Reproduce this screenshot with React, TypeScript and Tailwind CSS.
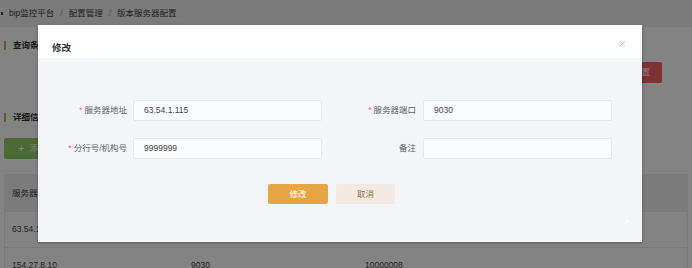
import React from "react";
import { X } from "lucide-react";

const font = "font-['Liberation_Sans','Noto_Sans_CJK_SC',sans-serif]";

const FormLabel: React.FC<{ text: string; required?: boolean; pad: string }> = ({ text, required, pad }) => (
  <div className={`flex items-center justify-end text-[8.5px] text-[#606266] ${pad}`}>
    {required && <span className="mr-[2px] text-[#f56c6c]">*</span>}
    <span>{text}</span>
  </div>
);

const FormInput: React.FC<{ value?: string }> = ({ value }) => (
  <div className="flex h-[21px] items-center rounded-[2px] border border-[#e6e8ef] bg-[#fafbfd] pl-[10px] text-[8.5px] text-[#444]">
    {value}
  </div>
);

const SectionTitle: React.FC<{ text: string }> = ({ text }) => (
  <div className="flex h-[12px] items-center gap-[7px] pl-[4px]">
    <div className="h-[9px] w-[2px] bg-[#e0a84a]" />
    <span className="text-[8.5px] font-bold leading-[12px] text-[#333]">{text}</span>
  </div>
);

export default function App() {
  return (
    <div className={`relative h-[268px] w-[692px] overflow-hidden bg-white ${font}`}>
      {/* page underneath */}
      <div className="flex h-[27px] items-center bg-[#efefef] text-[8.5px]">
        <div className="ml-[1px] mr-[6px] h-[3px] w-[2px] bg-[#444]" />
        <span className="text-[#444]">bip监控平台</span>
        <span className="mx-[6px] text-[#aaa]">/</span>
        <span className="text-[#444]">配置管理</span>
        <span className="mx-[6px] text-[#aaa]">/</span>
        <span className="text-[#444]">版本服务器配置</span>
      </div>

      <div className="mt-[12px]">
        <SectionTitle text="查询条件" />
      </div>
      <div className="mt-[11px] flex justify-end gap-[8px] pr-[30px]">
        <div className="flex h-[21px] w-[41px] items-center justify-center rounded-[2px] bg-[#409eff] text-[8.5px] text-white">查询</div>
        <div className="flex h-[21px] w-[41px] items-center justify-center rounded-[2px] bg-[#f76165] text-[8.5px] text-white">重置</div>
      </div>

      <div className="mt-[28px]">
        <SectionTitle text="详细信息" />
      </div>
      <div className="ml-[4px] mt-[15px] flex h-[21px] w-[60px] items-center gap-[5px] rounded-[2px] bg-[#92ce69] pl-[14px] text-[8.5px] text-white">
        <span className="text-[11px] leading-none">+</span>
        <span>添加</span>
      </div>

      <div className="mx-[4px] mt-[15px] border border-[#ebeef5] text-[8.5px] text-[#444]">
        <div className="grid h-[36px] grid-cols-[179px_174px_1fr] items-center bg-[#f0f0f0] pl-[7px]">
          <span>服务器地址</span>
          <span>服务器端口</span>
          <span>分行号/机构号</span>
        </div>
        <div className="grid h-[36px] grid-cols-[179px_174px_1fr] items-center border-t border-[#ebeef5] pl-[7px]">
          <span>63.54.1.115</span>
          <span>9030</span>
          <span>9999999</span>
        </div>
        <div className="grid h-[36px] grid-cols-[179px_174px_1fr] items-center border-t border-[#ebeef5] pl-[7px]">
          <span>154.27.8.10</span>
          <span>9030</span>
          <span>10000008</span>
        </div>
      </div>

      {/* overlay */}
      <div className="absolute inset-0 bg-black/[0.485]" />

      {/* dialog */}
      <div className="absolute left-[38px] top-[25px] flex h-[217px] w-[604px] flex-col shadow-[0_1px_3px_rgba(0,0,0,0.3)]">
        <div className="relative h-[33px] bg-white pl-[14px] pt-[9px]">
          <span className="text-[9.5px] font-bold leading-[20px] text-[#303133]">修改</span>
          <X className="absolute right-[15px] top-[14px] h-[9px] w-[9px] text-[#95a0c6]" strokeWidth={1.6} />
        </div>
        <div className="relative flex-1 bg-[#f4f5f9] pt-[42px]">
          <div className="grid grid-cols-[95px_189px_101px_189px] gap-y-[17px]">
            <FormLabel text="服务器地址" required pad="pr-[6px]" />
            <FormInput value="63.54.1.115" />
            <FormLabel text="服务器端口" required pad="pr-[7px]" />
            <FormInput value="9030" />
            <FormLabel text="分行号/机构号" required pad="pr-[6px]" />
            <FormInput value="9999999" />
            <FormLabel text="备注" pad="pr-[7px]" />
            <FormInput />
          </div>
          <div className="mt-[25px] flex gap-[8px] pl-[230px] text-[8.5px]">
            <div className="flex h-[20px] w-[60px] items-center justify-center rounded-[2px] bg-[#e8a545] text-white">修改</div>
            <div className="flex h-[20px] w-[59px] items-center justify-center rounded-[2px] bg-[#f3ebe3] text-[#8c6d4c]">取消</div>
          </div>
          <div className="absolute left-[588px] top-[162px] h-[3px] w-[3px] bg-white" />
        </div>
      </div>
    </div>
  );
}
